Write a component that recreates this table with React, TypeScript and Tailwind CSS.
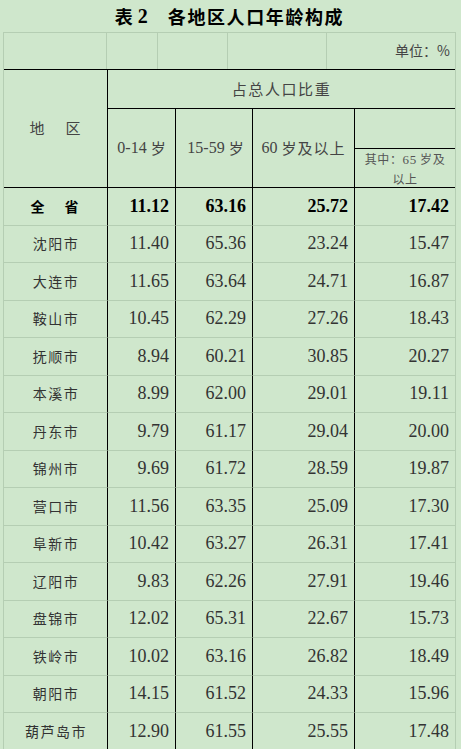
import React from "react";

const rows: [string, string, string, string, string][] = [
  ["沈阳市", "11.40", "65.36", "23.24", "15.47"],
  ["大连市", "11.65", "63.64", "24.71", "16.87"],
  ["鞍山市", "10.45", "62.29", "27.26", "18.43"],
  ["抚顺市", "8.94", "60.21", "30.85", "20.27"],
  ["本溪市", "8.99", "62.00", "29.01", "19.11"],
  ["丹东市", "9.79", "61.17", "29.04", "20.00"],
  ["锦州市", "9.69", "61.72", "28.59", "19.87"],
  ["营口市", "11.56", "63.35", "25.09", "17.30"],
  ["阜新市", "10.42", "63.27", "26.31", "17.41"],
  ["辽阳市", "9.83", "62.26", "27.91", "19.46"],
  ["盘锦市", "12.02", "65.31", "22.67", "15.73"],
  ["铁岭市", "10.02", "63.16", "26.82", "18.49"],
  ["朝阳市", "14.15", "61.52", "24.33", "15.96"],
  ["葫芦岛市", "12.90", "61.55", "25.55", "17.48"],
];

const cjk = "font-['Noto_Sans_CJK_SC',sans-serif]";
const num = "font-['Liberation_Serif','Noto_Sans_CJK_SC',serif]";

export default function App() {
  return (
    <div className="w-[461px] h-[749px] overflow-hidden bg-[#cfe7cc] text-[#333]">
      {/* title */}
      <div className={`h-[32px] flex items-center justify-center pr-[2px] ${cjk} font-bold text-[18px] text-black`}>
        <span>表</span>
        <span className={`ml-[5px] ${num} text-[20px]`}>2</span>
        <span className="ml-[20px] tracking-[1.6px]">各地区人口年龄构成</span>
      </div>

      <div className="flex">
        <div className="w-[3px]" />
        <div className="w-[453px] border-l border-r border-[#b5ceb3]">
          {/* unit row */}
          <div className="h-[37px] flex border-t border-[#b5ceb3]">
            <div className="w-[103px] border-r border-[#b5ceb3]" />
            <div className="w-[51px] border-r border-[#b5ceb3]" />
            <div className="w-[70px] border-r border-[#b5ceb3]" />
            <div className="w-[99px] border-r border-[#b5ceb3]" />
            <div className={`flex-1 flex items-center justify-end pr-[5px] pb-[1px] text-[14px] text-[#444] ${cjk}`}>
              单位：%
            </div>
          </div>

          {/* header */}
          <div className="w-[451px] grid grid-cols-[103px_68px_77px_102px_101px] grid-rows-[39px_40px_39px] text-[#444]">
            <div className={`row-span-3 border-t border-black flex items-center justify-center text-[15px] tracking-[3px] pl-[2px] ${cjk}`}>
              地　区
            </div>
            <div className={`col-span-4 border-t border-l border-black flex items-center justify-center text-[15px] tracking-[1.6px] ${cjk}`}>
              占总人口比重
            </div>
            <div className={`row-span-2 border-t border-l border-black flex items-center justify-center text-[16px] ${num}`}>
              0-14 <span className={`ml-[4px] text-[15px] ${cjk}`}>岁</span>
            </div>
            <div className={`row-span-2 border-t border-l border-black flex items-center justify-center pl-[3px] text-[16px] ${num}`}>
              15-59 <span className={`ml-[4px] text-[15px] ${cjk}`}>岁</span>
            </div>
            <div className={`row-span-2 border-t border-l border-black flex items-center justify-center text-[16px] ${num}`}>
              60 <span className={`ml-[4px] text-[15px] tracking-[1px] ${cjk}`}>岁及以上</span>
            </div>
            <div className="border-t border-l border-black" />
            <div className={`border-t border-l border-black flex flex-col items-center justify-center text-[12px] leading-[19px] text-[#555] tracking-[0.6px] ${cjk}`}>
              <span>
                其中：<span className={`${num} text-[13px]`}>65</span> 岁及
              </span>
              <span>以上</span>
            </div>
          </div>

          {/* body */}
          <div className="w-[451px] grid grid-cols-[103px_68px_77px_102px_101px] auto-rows-[37.5px]">
            <Row name="全　省" v={["11.12", "63.16", "25.72", "17.42"]} bold first />
            {rows.map((r) => (
              <Row key={r[0]} name={r[0]} v={[r[1], r[2], r[3], r[4]]} />
            ))}
          </div>
        </div>
      </div>
    </div>
  );
}

function Row({
  name,
  v,
  bold,
  first,
}: {
  name: string;
  v: string[];
  bold?: boolean;
  first?: boolean;
}) {
  const top = first ? "border-t border-black" : "border-t border-[#b5ceb3]";
  const w = bold ? "font-bold text-black" : "text-[#333]";
  return (
    <>
      <div
        className={`${top} flex items-center justify-center pl-[1px] text-[14px] ${bold ? "tracking-[3px]" : "tracking-[1.5px] text-[#3a3a3a]"} ${w} ${cjk}`}
      >
        {name}
      </div>
      {v.map((x, i) => (
        <div
          key={i}
          className={`${top} border-l border-l-black flex items-center justify-end pr-[6px] text-[18px] ${w} ${num}`}
        >
          {x}
        </div>
      ))}
    </>
  );
}
